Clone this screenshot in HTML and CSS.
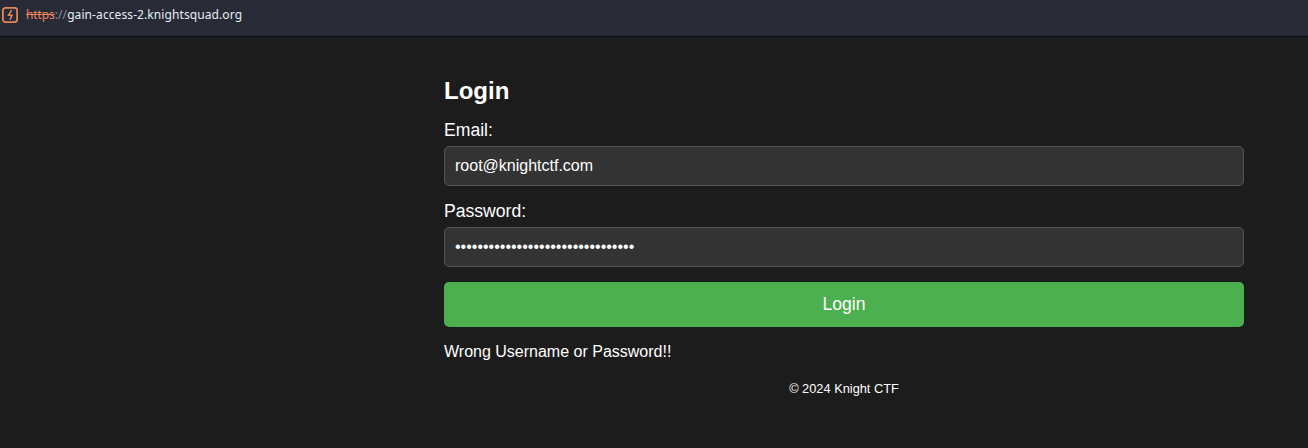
FILE: index.html
```html
<!DOCTYPE html>
<html lang="en">
<head>
    <meta charset="UTF-8">
    <title>Login</title>
    <link rel="stylesheet" href="styles.css">
</head>
<body>

<!-- address bar -->
<div class="urlbar">
    <svg class="warn-icon" width="18" height="18" viewBox="0 0 18 18" fill="none">
        <rect x="1.9" y="1.9" width="14.2" height="14.2" rx="2.5" stroke="#e8845c" stroke-width="1.8"/>
        <path d="M10.6 4.2 7.6 9.2h3.4l-2 4.6" stroke="#e8845c" stroke-width="1.5" fill="none"/>
    </svg>
    <span class="url"><span class="scheme">https</span><span class="slashes">://</span>gain-access-2.knightsquad.org</span>
</div>

<div class="container">
    <h2 class="title">Login</h2>
    <form class="login-form">
        <label class="field-label" for="email">Email:</label>
        <input class="field" id="email" type="email" value="root@knightctf.com">
        <label class="field-label" for="password">Password:</label>
        <input class="field" id="password" type="password" value="abcdefghijklmnopqrstuvwxyz123456">
        <button class="submit" type="button">Login</button>
    </form>
    <p class="error">Wrong Username or Password!!</p>
    <p class="footer">© 2024 Knight CTF</p>
</div>

</body>
</html>
```

FILE: styles.css
```css
html, body {
    margin: 0;
    padding: 0;
}

body {
    height: 448px;
    overflow: hidden;
    background: #1c1c1c;
    color: #fff;
    font-family: "Liberation Sans", Arial, sans-serif;
}

/* address bar */
.urlbar {
    display: flex;
    align-items: center;
    gap: 7px;
    box-sizing: border-box;
    height: 37px;
    padding: 0 0 6px 1px;
    background: #282a36;
    border-bottom: 1px solid #0d0d0f;
}

.warn-icon {
    flex: none;
}

.url {
    font: 12px/16px "Noto Sans", sans-serif;
    letter-spacing: 0.09px;
    color: #e6edf5;
}

.scheme {
    color: #e8845c;
    text-decoration: line-through;
    letter-spacing: -0.1px;
}

.slashes {
    color: #8b90a3;
}

/* form */
.container {
    width: 800px;
    margin-left: 444px;
    padding-top: 40px;
}

.title {
    margin: 0 0 15px;
    font-size: 24px;
    line-height: 28px;
    font-weight: 700;
}

.login-form {
    display: flex;
    flex-direction: column;
}

.field-label {
    margin-bottom: 6px;
    font-size: 17.6px;
    line-height: 20px;
}

.field {
    box-sizing: border-box;
    height: 40px;
    margin-bottom: 15px;
    padding: 0 10px;
    background: #333;
    border: 1px solid #555;
    border-radius: 5px;
    color: #fff;
    font: 16px "Liberation Sans", Arial, sans-serif;
    outline: none;
}

.submit {
    height: 45px;
    background: #4caf50;
    border: 0;
    border-radius: 5px;
    color: #fff;
    font: 17.6px "Liberation Sans", Arial, sans-serif;
}

.error {
    margin: 16px 0 0;
    font-size: 16px;
    line-height: 18px;
}

.footer {
    margin: 20px 0 0;
    font-size: 12.8px;
    line-height: 15px;
    text-align: center;
}
```
